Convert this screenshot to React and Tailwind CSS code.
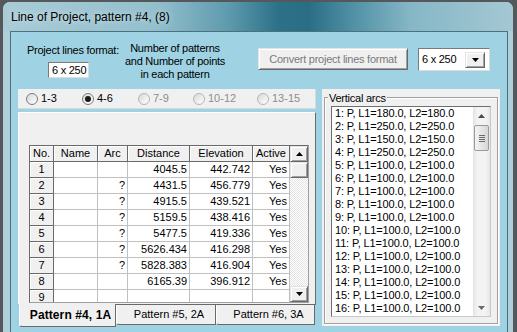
import React from 'react';

const arcs = [
  [1, '180.0'], [2, '250.0'], [3, '150.0'], [4, '250.0'],
  ...Array.from({ length: 12 }, (_, i) => [i + 5, '100.0']),
];

const rows = [
  { no: '1', name: '', arc: '', dist: '4045.5', elev: '442.742', active: 'Yes' },
  { no: '2', name: '', arc: '?', dist: '4431.5', elev: '456.779', active: 'Yes' },
  { no: '3', name: '', arc: '?', dist: '4915.5', elev: '439.521', active: 'Yes' },
  { no: '4', name: '', arc: '?', dist: '5159.5', elev: '438.416', active: 'Yes' },
  { no: '5', name: '', arc: '?', dist: '5477.5', elev: '419.336', active: 'Yes' },
  { no: '6', name: '', arc: '?', dist: '5626.434', elev: '416.298', active: 'Yes' },
  { no: '7', name: '', arc: '?', dist: '5828.383', elev: '416.904', active: 'Yes' },
  { no: '8', name: '', arc: '', dist: '6165.39', elev: '396.912', active: 'Yes' },
  { no: '9', name: '', arc: '', dist: '', elev: '', active: '' },
];

const cols = [
  { key: 'no', label: 'No.', w: 'w-[24px]' },
  { key: 'name', label: 'Name', w: 'w-[44px]' },
  { key: 'arc', label: 'Arc', w: 'w-[30px]' },
  { key: 'dist', label: 'Distance', w: 'w-[62px]' },
  { key: 'elev', label: 'Elevation', w: 'w-[63px]' },
  { key: 'active', label: 'Active', w: 'w-[37px]' },
];

// classic raised 3d look
const bevel =
  'bg-[#f0f0f0] border border-t-[#e3e3e3] border-l-[#e3e3e3] border-r-[#696969] border-b-[#696969] shadow-[inset_1px_1px_0_#ffffff,inset_-1px_-1px_0_#a0a0a0]';

const Tri = ({ up, color = '#000000' }) => (
  <svg width="7" height="4" viewBox="0 0 7 4">
    <path d={up ? 'M3.5 0L7 4H0z' : 'M0 0H7L3.5 4z'} fill={color} />
  </svg>
);

const Radio = ({ label, checked, disabled, w }) => (
  <div className={`${w} flex items-center`}>
    <div
      className={`w-[12px] h-[12px] rounded-full border flex items-center justify-center bg-[linear-gradient(135deg,#d8d8d8,#ffffff)] ${
        disabled ? 'border-[#b5b5b5]' : 'border-[#7c7c7c]'
      }`}
    >
      {checked && <div className="w-[6px] h-[6px] rounded-full bg-[#1a1a1a]" />}
    </div>
    <span className={`ml-[3px] leading-none ${disabled ? 'text-[#8d8d8d]' : 'text-black'}`}>{label}</span>
  </div>
);

const Grid = () => (
  <div className="w-[280px] h-[158px] border border-[#696969] border-r-[#a0a0a0] border-b-[#a0a0a0] bg-white flex overflow-hidden">
    <div className="w-[260px] flex flex-col shrink-0">
      <div className="flex shrink-0">
        {cols.map((c) => (
          <div
            key={c.key}
            className={`${c.w} h-[16px] shrink-0 bg-[#f0f0f0] border-r border-b border-[#696969] shadow-[inset_1px_1px_0_#ffffff] flex items-center justify-center leading-none`}
          >
            {c.label}
          </div>
        ))}
      </div>
      {rows.map((r) => (
        <div key={r.no} className="flex shrink-0">
          {cols.map((c) =>
            c.key === 'no' ? (
              <div
                key={c.key}
                className={`${c.w} h-[16px] shrink-0 bg-[#f0f0f0] border-r border-b border-[#696969] shadow-[inset_1px_1px_0_#ffffff] flex items-center justify-center leading-none`}
              >
                {r.no}
              </div>
            ) : (
              <div
                key={c.key}
                className={`${c.w} h-[16px] shrink-0 border-r border-b border-[#c0c0c0] flex items-center justify-end pr-[2px] leading-none`}
              >
                {r[c.key]}
              </div>
            )
          )}
        </div>
      ))}
    </div>
    <div className="w-[18px] flex flex-col shrink-0">
      <div className={`h-[16px] shrink-0 flex items-center justify-center ${bevel}`}>
        <Tri up />
      </div>
      <div className={`h-[16px] shrink-0 ${bevel}`} />
      <div className="flex-1 bg-[image:repeating-conic-gradient(#ffffff_0%_25%,#e4e4e4_0%_50%)] bg-[length:2px_2px]" />
      <div className={`h-[16px] shrink-0 flex items-center justify-center ${bevel}`}>
        <Tri />
      </div>
    </div>
  </div>
);

const ListBox = () => (
  <div className="w-[160px] h-[211px] bg-white border border-[#6f6f6f] border-r-[#c8c8c8] border-b-[#c8c8c8] flex overflow-hidden">
    <div className="flex-1 pl-[3px] leading-[13px] tracking-[-0.15px] whitespace-nowrap">
      {arcs.map(([n, v]) => (
        <div key={n}>{`${n}: P, L1=${v}, L2=${v}`}</div>
      ))}
    </div>
    <div className="w-[17px] shrink-0 flex flex-col bg-[linear-gradient(90deg,#e3e3e3,#f3f3f3_25%,#f3f3f3_75%,#e6e6e6)]">
      <div className="h-[17px] flex items-center justify-center">
        <Tri up color="#4a4a4a" />
      </div>
      <div className="mt-[1px] mx-[1px] h-[26px] rounded-[2px] border border-[#9a9a9a] bg-[linear-gradient(90deg,#f4f4f4,#e6e6e6_50%,#d6d6d6)] flex flex-col items-center justify-center gap-[1px]">
        <div className="w-[6px] h-[1px] bg-[#6a6a6a]" />
        <div className="w-[6px] h-[1px] bg-[#6a6a6a]" />
        <div className="w-[6px] h-[1px] bg-[#6a6a6a]" />
        <div className="w-[6px] h-[1px] bg-[#6a6a6a]" />
      </div>
      <div className="flex-1" />
      <div className="h-[17px] flex items-center justify-center">
        <Tri color="#6a6a6a" />
      </div>
    </div>
  </div>
);

const App = () => {
  return (
    <div className="w-[517px] h-[332px] overflow-hidden bg-[#55585a] font-['Liberation_Sans',Arial,sans-serif] text-[11px] text-black">
      <div className="ml-[3px] mt-[2px] w-[510px] h-[340px] rounded-t-[7px] bg-[#afd0da] flex flex-col overflow-hidden">
        {/* title bar */}
        <div className="h-[29px] shrink-0 flex items-center pl-[8px] bg-[linear-gradient(90deg,#a9ccd7_0%,#93bfcd_30%,#5f9bae_44%,#2c7188_54%,#2a6e85_60%,#4e8ea3_68%,#86b7c6_80%,#a4c8d3_100%)]">
          <span className="text-[12px] leading-none [text-shadow:0_0_6px_rgba(255,255,255,0.7)]">
            Line of Project, pattern #4, (8)
          </span>
        </div>

        {/* client */}
        <div className="ml-[7px] w-[498px] h-[310px] shrink-0 border border-[#4b717d] bg-[#9fd3e4] flex flex-col">
          {/* top row */}
          <div className="h-[57px] shrink-0 flex items-start tracking-[-0.25px]">
            <div className="ml-[16px] mt-[12px] w-[93px] shrink-0 flex flex-col">
              <span className="leading-[13px] whitespace-nowrap">Project lines format:</span>
              <div className="ml-[21px] mt-[5px] w-[41px] h-[16px] bg-white border border-[#7a7a7a] border-r-[#dcdcdc] border-b-[#dcdcdc] flex items-center pl-[3px] leading-none">
                6 x 250
              </div>
            </div>
            <div className="mt-[10px] w-[110px] shrink-0 text-center leading-[13px]">
              <div>Number of patterns</div>
              <div>and Number of points</div>
              <div>in each pattern</div>
            </div>
            <div className={`ml-[28px] mt-[16px] w-[150px] h-[22px] shrink-0 flex items-center justify-center text-[#7a7a7a] leading-none ${bevel}`}>
              Convert project lines format
            </div>
            <div className="ml-[10px] mt-[16px] w-[72px] h-[23px] shrink-0 bg-white border border-[#7a7a7a] border-r-[#dcdcdc] border-b-[#dcdcdc] flex items-center">
              <span className="flex-1 pl-[3px] leading-none">6 x 250</span>
              <div className={`mr-[4px] w-[20px] h-[16px] flex items-center justify-center ${bevel}`}>
                <Tri />
              </div>
            </div>
          </div>

          {/* lower part */}
          <div className="flex">
            <div className="ml-[7px] w-[298px] shrink-0 flex flex-col">
              <div className="h-[20px] bg-[#f0f0f0] border-r border-b border-[#dadada] flex items-center pl-[8px]">
                <Radio label="1-3" w="w-[56px]" />
                <Radio label="4-6" w="w-[56px]" checked />
                <Radio label="7-9" w="w-[55px]" disabled />
                <Radio label="10-12" w="w-[64px]" disabled />
                <Radio label="13-15" w="w-[50px]" disabled />
              </div>
              <div className="mt-[3px] h-[193px] bg-[#f0f0f0] border border-t-white border-l-white border-r-[#696969] border-b-[#696969] pl-[10px] pt-[32px]">
                <Grid />
              </div>
              <div className="flex h-[23px] -mt-[1px]">
                <div className="ml-[1px] w-[97px] h-[23px] bg-[#f0f0f0] border-l border-l-white border-r border-r-[#696969] border-b border-b-[#696969] rounded-bl-[3px] flex items-center justify-center pl-[6px] text-[12px] font-bold tracking-[0.1px] leading-none">
                  Pattern #4, 1A
                </div>
                <div className="mt-[1px] w-[100px] h-[20px] bg-[#f0f0f0] border-l border-l-white border-r border-r-[#696969] border-b border-b-[#696969] rounded-bl-[3px] flex items-center justify-center pl-[6px] leading-none">
                  Pattern #5, 2A
                </div>
                <div className="mt-[1px] w-[99px] h-[20px] bg-[#f0f0f0] border-l border-l-white border-r border-r-[#696969] border-b border-b-[#696969] rounded-bl-[3px] flex items-center justify-center pl-[6px] leading-none">
                  Pattern #6, 3A
                </div>
              </div>
            </div>

            {/* vertical arcs group */}
            <div className="relative ml-[6px] w-[178px] h-[237px] shrink-0 bg-[#f0f0f0] pt-[8px] px-[2px] pb-[2px]">
              <div className="h-full border border-[#a0a0a0] shadow-[inset_1px_1px_0_#ffffff,1px_1px_0_#ffffff] pl-[6px] pt-[8px]">
                <ListBox />
              </div>
              <span className="absolute left-[6px] top-[3px] px-[1px] bg-[#f0f0f0] leading-[13px] tracking-[-0.25px]">
                Vertical arcs
              </span>
            </div>
          </div>
        </div>
      </div>
    </div>
  );
};

export default App;
